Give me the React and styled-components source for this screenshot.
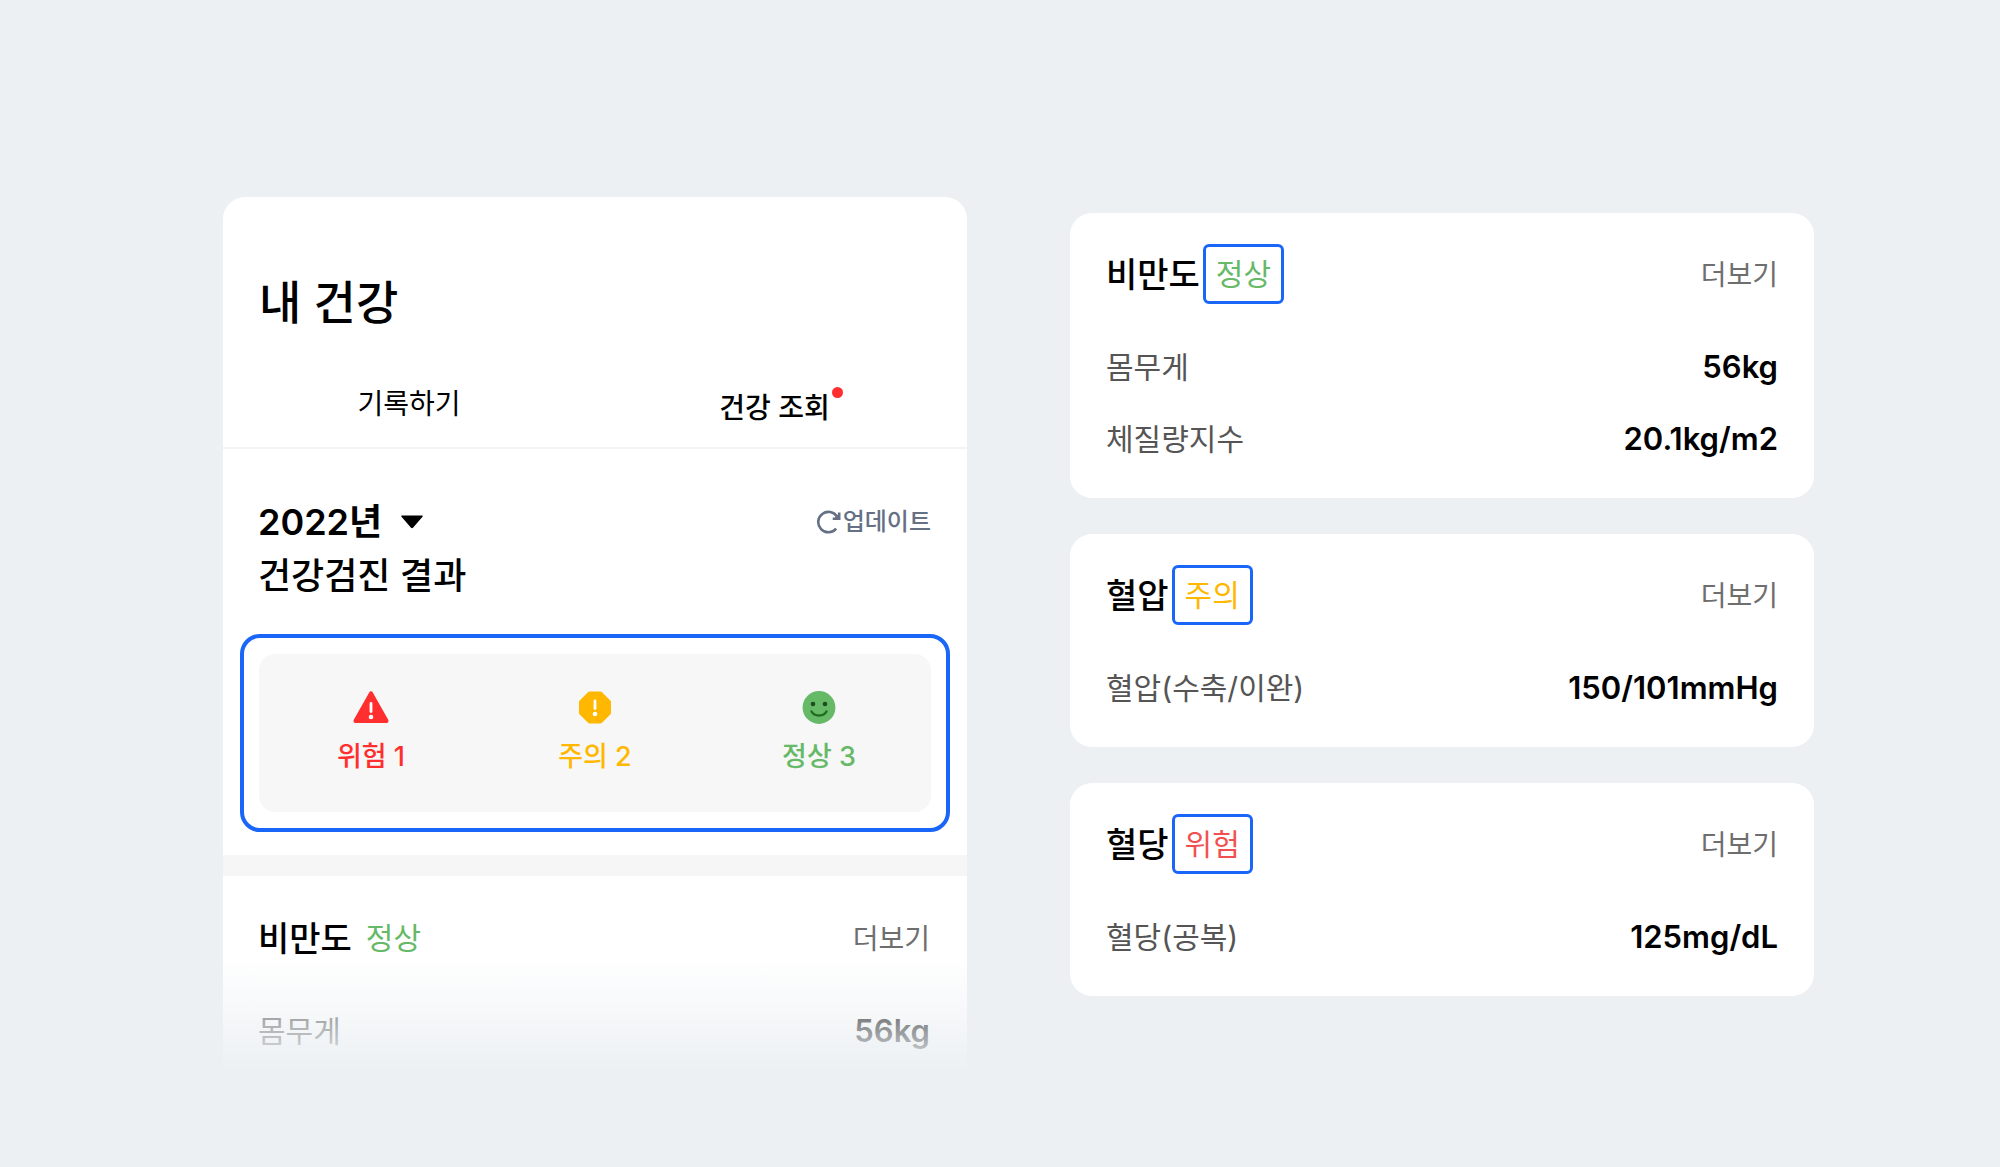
import React from 'react';
import styled, { createGlobalStyle } from 'styled-components';

const colors = {
  page: '#ecf0f3',
  blue: '#1a66f8',
  danger: '#ff2f2f',
  warning: '#ffb700',
  normal: '#66b966',
};

const GlobalStyle = createGlobalStyle`
  * {
    box-sizing: border-box;
  }
  body {
    margin: 0;
    background-color: ${colors.page};
    color: #000;
    font-family: Inter, 'Noto Sans CJK KR', sans-serif;
  }
  button, select {
    margin: 0;
    padding: 0;
    border: 0;
    background: none;
    color: inherit;
    font: inherit;
    cursor: pointer;
  }
  h1, h2, h3, dl, dt, dd {
    margin: 0;
  }
`;

const Page = styled.main`
  display: grid;
  grid-template-columns: 1fr 1fr;
  column-gap: 103px;
  align-items: start;
  min-height: 100vh;
  padding: 197px 186px 87px 223px;
`;

const Phone = styled.section`
  position: relative;
  min-width: 0;
  background-color: #fff;
  border-radius: 22px 22px 0 0;
  &::after {
    content: '';
    position: absolute;
    right: 0;
    bottom: 0;
    left: 0;
    height: 116px;
    background: linear-gradient(to bottom, rgba(236, 240, 243, 0), ${colors.page});
    pointer-events: none;
  }
`;

const PageTitle = styled.h1`
  padding: 75px 36px 0;
  font-size: 46px;
  font-weight: 500;
  line-height: 60px;
`;

const Tabs = styled.nav`
  display: grid;
  grid-template-columns: 1fr 1fr;
  align-items: end;
  margin-top: 51px;
  border-bottom: 2px solid #f3f4f5;
`;

const Tab = styled.button`
  display: flex;
  justify-content: center;
  gap: 2px;
  padding-bottom: ${({ $active }) => ($active ? 18 : 22)}px;
  font-size: 28px;
  font-weight: ${({ $active }) => ($active ? 500 : 400)};
  line-height: 42px;
`;

const Dot = styled.span`
  width: 11px;
  height: 11px;
  border-radius: 50%;
  background-color: ${colors.danger};
`;

const Summary = styled.div`
  display: flex;
  justify-content: space-between;
  align-items: flex-start;
  padding: 46px 36px 31px 35px;
`;

const SummaryTitle = styled.h2`
  font-size: 36px;
  font-weight: 500;
  line-height: 54px;
`;

const YearPicker = styled.div`
  display: flex;
  align-items: center;
  gap: 17px;
`;

const YearSelect = styled.select`
  appearance: none;
  height: 54px;
  font-weight: 600;
  line-height: 54px;
`;

const UpdateButton = styled.button`
  display: flex;
  align-items: center;
  gap: 2px;
  height: 54px;
  color: #667085;
  font-size: 24px;
  font-weight: 500;
  line-height: 32px;
`;

const Highlight = styled.div`
  margin: 0 17px 23px;
  padding: 16px 15px;
  border: 4px solid ${colors.blue};
  border-radius: 20px;
`;

const StatusPanel = styled.div`
  display: grid;
  grid-template-columns: repeat(3, 1fr);
  padding: 36px 0 35px;
  border-radius: 16px;
  background-color: #f7f7f7;
`;

const Status = styled.div`
  display: flex;
  flex-direction: column;
  align-items: center;
  gap: 11px;
  color: ${({ $level }) => colors[$level]};
  font-size: 27px;
  font-weight: 500;
  line-height: 40px;
`;

const Divider = styled.div`
  height: 21px;
  background-color: #f6f6f6;
`;

const Preview = styled.div`
  padding: 32px 37px 18px 35px;
`;

const Cards = styled.div`
  display: flex;
  flex-direction: column;
  gap: 36px;
  min-width: 0;
  margin-top: 16px;
`;

const Card = styled.section`
  padding: 31px 36px 35px;
  border-radius: 22px;
  background-color: #fff;
`;

const CardHeader = styled.div`
  display: flex;
  align-items: center;
  gap: ${({ $wide }) => ($wide ? 14 : 3)}px;
  height: 60px;
  margin-bottom: 39px;
`;

const CardTitle = styled.h3`
  padding-top: 2px;
  font-size: 34px;
  font-weight: 500;
  line-height: 48px;
`;

const Badge = styled.span`
  color: ${({ $level }) => ($level === 'danger' ? '#f25050' : colors[$level])};
  font-size: 30px;
  line-height: 54px;
`;

const BoxedBadge = styled(Badge)`
  padding: 0 10px;
  border: 3px solid ${colors.blue};
  border-radius: 6px;
`;

const MoreLink = styled.a`
  margin-left: auto;
  padding-top: 2px;
  color: #6e6e6e;
  font-size: 28px;
  line-height: 40px;
  text-decoration: none;
`;

const Measures = styled.dl`
  display: flex;
  flex-direction: column;
  gap: 24px;
`;

const Measure = styled.div`
  display: flex;
  justify-content: space-between;
  line-height: 48px;
  dt {
    color: #555;
    font-size: 30px;
  }
  dd {
    font-size: 31px;
    font-weight: 600;
  }
`;

const DangerIcon = () => (
  <svg width="36" height="36" viewBox="0 0 36 36" aria-hidden="true">
    <path
      d="M16.2 2.4a2 2 0 0 1 3.6 0l15.4 27.4c.8 1.6.1 3.2-1.7 3.2h-31C.7 33 0 31.400.8 29.800z"
      fill={colors.danger}
    />
    <path d="M18 13.500v8" stroke="#fff" strokeWidth="2.800" strokeLinecap="round" />
    <circle cx="18" cy="27" r="2.300" fill="#fff" />
  </svg>
);

const WarningIcon = () => (
  <svg width="36" height="36" viewBox="0 0 36 36" aria-hidden="true">
    <path
      d="M12.700 1.500h10.600c.7 0 1.200.2 1.700.7l8.300 8.300c.5.5.7 1 .7 1.700v10.600c0 .7-.2 1.200-.7 1.700l-8.300 8.300c-.5.5-1 .7-1.700.7H12.700c-.7 0-1.200-.2-1.700-.7l-8.300-8.300c-.5-.5-.7-1-.7-1.700V12.200c0-.7.2-1.200.7-1.700L11 2.200c.5-.5 1-.7 1.700-.7z"
      fill={colors.warning}
    />
    <path d="M18 11v7.500" stroke="#fff" strokeWidth="2.800" strokeLinecap="round" />
    <circle cx="18" cy="24" r="2.300" fill="#fff" />
  </svg>
);

const NormalIcon = () => (
  <svg width="36" height="36" viewBox="0 0 36 36" aria-hidden="true">
    <circle cx="18" cy="17.500" r="16.400" fill={colors.normal} />
    <circle cx="12" cy="14" r="2.300" fill="#1f4d1f" />
    <circle cx="24" cy="14" r="2.300" fill="#1f4d1f" />
    <path
      d="M10.500 21.500c2.900 5.300 12.100 5.300 15 0"
      fill="none"
      stroke="#1f6b1f"
      strokeWidth="2.400"
      strokeLinecap="round"
    />
  </svg>
);

const RefreshIcon = () => (
  <svg width="25" height="24" viewBox="0 0 25 24" fill="none" aria-hidden="true">
    <path
      d="M20.200 18.700A10.200 10.200 0 1 1 21.200 6.800"
      stroke="currentColor"
      strokeWidth="2.600"
    />
    <path d="M23.200 2.500v6.300h-6.500" stroke="currentColor" strokeWidth="2.600" />
    <path d="M23.500 3v5.800h-5.500z" fill="currentColor" />
  </svg>
);

const CaretIcon = () => (
  <svg width="24" height="14" viewBox="0 0 24 14" aria-hidden="true">
    <path
      d="M2 .5h20c.8 0 1 .7.500 1.200L13 12.800c-.6.6-1.400.6-2 0L1.500 1.700C1 1.200 1.200.5 2 .5z"
      fill="#000"
    />
  </svg>
);

const statuses = [
  { level: 'danger', label: '위험 1', Icon: DangerIcon },
  { level: 'warning', label: '주의 2', Icon: WarningIcon },
  { level: 'normal', label: '정상 3', Icon: NormalIcon },
];

const cards = [
  {
    title: '비만도',
    level: 'normal',
    badge: '정상',
    measures: [
      ['몸무게', '56kg'],
      ['체질량지수', '20.1kg/m2'],
    ],
  },
  {
    title: '혈압',
    level: 'warning',
    badge: '주의',
    measures: [['혈압(수축/이완)', '150/101mmHg']],
  },
  {
    title: '혈당',
    level: 'danger',
    badge: '위험',
    measures: [['혈당(공복)', '125mg/dL']],
  },
];

const MeasureList = ({ items }) => (
  <Measures>
    {items.map(([name, value]) => (
      <Measure key={name}>
        <dt>{name}</dt>
        <dd>{value}</dd>
      </Measure>
    ))}
  </Measures>
);

const App = () => (
  <>
    <GlobalStyle />
    <Page>
      <Phone>
        <PageTitle>내 건강</PageTitle>
        <Tabs>
          <Tab type="button">기록하기</Tab>
          <Tab type="button" $active>
            건강 조회
            <Dot />
          </Tab>
        </Tabs>
        <Summary>
          <SummaryTitle>
            <YearPicker>
              <YearSelect aria-label="연도" defaultValue="2022">
                <option value="2022">2022년</option>
              </YearSelect>
              <CaretIcon />
            </YearPicker>
            건강검진 결과
          </SummaryTitle>
          <UpdateButton type="button">
            <RefreshIcon />
            업데이트
          </UpdateButton>
        </Summary>
        <Highlight>
          <StatusPanel>
            {statuses.map(({ level, label, Icon }) => (
              <Status key={level} $level={level}>
                <Icon />
                {label}
              </Status>
            ))}
          </StatusPanel>
        </Highlight>
        <Divider />
        <Preview>
          <CardHeader $wide>
            <CardTitle>비만도</CardTitle>
            <Badge $level="normal">정상</Badge>
            <MoreLink href="#obesity">더보기</MoreLink>
          </CardHeader>
          <MeasureList items={[['몸무게', '56kg']]} />
        </Preview>
      </Phone>
      <Cards>
        {cards.map(({ title, level, badge, measures }) => (
          <Card key={title}>
            <CardHeader>
              <CardTitle>{title}</CardTitle>
              <BoxedBadge $level={level}>{badge}</BoxedBadge>
              <MoreLink href={`#${level}`}>더보기</MoreLink>
            </CardHeader>
            <MeasureList items={measures} />
          </Card>
        ))}
      </Cards>
    </Page>
  </>
);

export default App;
